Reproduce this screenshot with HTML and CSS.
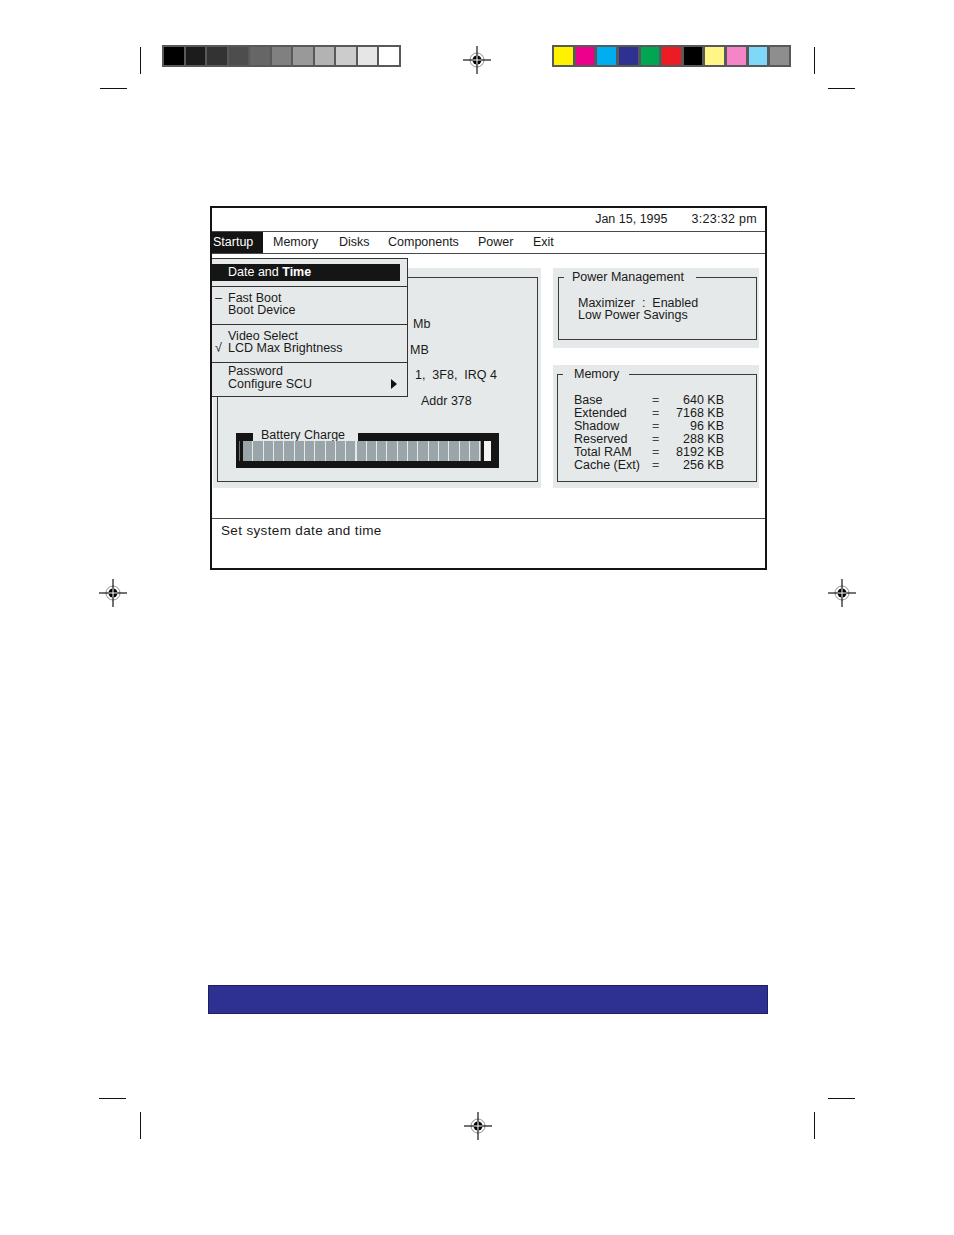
FILE: index.html
```html
<!DOCTYPE html>
<html lang="en">
<head>
<meta charset="utf-8">
<title>SCU Startup Menu</title>
<link rel="stylesheet" href="styles.css">
</head>
<body>
<div class="page">
  <div class="bars">
    <div class="strip gray">
      <span class="g0"></span><span class="g1"></span><span class="g2"></span><span class="g3"></span><span class="g4"></span><span class="g5"></span><span class="g6"></span><span class="g7"></span><span class="g8"></span><span class="g9"></span><span class="g10"></span>
    </div>
    <div class="strip color">
      <span class="c0"></span><span class="c1"></span><span class="c2"></span><span class="c3"></span><span class="c4"></span><span class="c5"></span><span class="c6"></span><span class="c7"></span><span class="c8"></span><span class="c9"></span><span class="c10"></span>
    </div>
  </div>

  <div class="screen">
    <div class="hdr">
      <span class="date">Jan 15, 1995</span>
      <span class="time">3:23:32 pm</span>
    </div>
    <div class="menu">
      <span class="m-startup">Startup</span>
      <span class="m-memory">Memory</span>
      <span class="m-disks">Disks</span>
      <span class="m-comp">Components</span>
      <span class="m-power">Power</span>
      <span class="m-exit">Exit</span>
    </div>
    <div class="body">
      <div class="left">
        <div class="left-box">
          <div class="val v1">Mb</div>
          <div class="val v2">MB</div>
          <div class="val v3">1,&nbsp; 3F8,&nbsp; IRQ 4</div>
          <div class="val v4">Addr 378</div>
          <div class="battery">
            <div class="bat-top"><span class="notch">Battery Charge</span></div>
            <div class="bat-bar">
              <span class="bat-l"></span>
              <span class="bat-seg"></span>
              <span class="bat-gap"></span>
              <span class="bat-end"></span>
            </div>
          </div>
        </div>
      </div>
      <div class="right">
        <div class="panel pm">
          <fieldset>
            <legend>Power Management</legend>
            <div class="fs-body">
              <div>Maximizer&nbsp; :&nbsp; Enabled</div>
              <div>Low Power Savings</div>
            </div>
          </fieldset>
        </div>
        <div class="panel mem">
          <fieldset>
            <legend>Memory</legend>
            <div class="mem-grid">
              <span>Base</span><span class="eq">=</span><span class="num">640 KB</span>
              <span>Extended</span><span class="eq">=</span><span class="num">7168 KB</span>
              <span>Shadow</span><span class="eq">=</span><span class="num">96 KB</span>
              <span>Reserved</span><span class="eq">=</span><span class="num">288 KB</span>
              <span>Total RAM</span><span class="eq">=</span><span class="num">8192 KB</span>
              <span>Cache (Ext)</span><span class="eq">=</span><span class="num">256 KB</span>
            </div>
          </fieldset>
        </div>
      </div>
    </div>
    <div class="status">Set system date and time</div>

    <div class="dropdown">
      <div class="dd-g1"><div class="dd-hl">Date and <b>Time</b></div></div>
      <div class="dd-g">
        <div class="dd-item"><span class="mk">–</span>Fast Boot</div>
        <div class="dd-item"><span class="mk"></span>Boot Device</div>
      </div>
      <div class="dd-g">
        <div class="dd-item"><span class="mk"></span>Video Select</div>
        <div class="dd-item"><span class="mk">√</span>LCD Max Brightness</div>
      </div>
      <div class="dd-g last">
        <div class="dd-item"><span class="mk"></span>Password</div>
        <div class="dd-item"><span class="mk"></span>Configure SCU<span class="tri"></span></div>
      </div>
    </div>
  </div>

  <div class="blue-bar"></div>

  <span class="crop v k1"></span>
  <span class="crop h k2"></span>
  <span class="crop v k3"></span>
  <span class="crop h k4"></span>
  <span class="crop h k5"></span>
  <span class="crop v k6"></span>
  <span class="crop h k7"></span>
  <span class="crop v k8"></span>

  <svg class="reg r1" viewBox="-15 -15 30 30"><circle r="7" fill="none" stroke="#777" stroke-width="0.8"/><circle r="4.5" fill="#000"/><line x1="-14" y1="0" x2="14" y2="0" stroke="#000" stroke-width="1.1"/><line x1="0" y1="-14" x2="0" y2="14" stroke="#000" stroke-width="1.1"/><line x1="-4.5" y1="0" x2="4.5" y2="0" stroke="#fff" stroke-width="1"/><line x1="0" y1="-4.5" x2="0" y2="4.5" stroke="#fff" stroke-width="1"/></svg>
  <svg class="reg r2" viewBox="-15 -15 30 30"><circle r="7" fill="none" stroke="#777" stroke-width="0.8"/><circle r="4.5" fill="#000"/><line x1="-14" y1="0" x2="14" y2="0" stroke="#000" stroke-width="1.1"/><line x1="0" y1="-14" x2="0" y2="14" stroke="#000" stroke-width="1.1"/><line x1="-4.5" y1="0" x2="4.5" y2="0" stroke="#fff" stroke-width="1"/><line x1="0" y1="-4.5" x2="0" y2="4.5" stroke="#fff" stroke-width="1"/></svg>
  <svg class="reg r3" viewBox="-15 -15 30 30"><circle r="7" fill="none" stroke="#777" stroke-width="0.8"/><circle r="4.5" fill="#000"/><line x1="-14" y1="0" x2="14" y2="0" stroke="#000" stroke-width="1.1"/><line x1="0" y1="-14" x2="0" y2="14" stroke="#000" stroke-width="1.1"/><line x1="-4.5" y1="0" x2="4.5" y2="0" stroke="#fff" stroke-width="1"/><line x1="0" y1="-4.5" x2="0" y2="4.5" stroke="#fff" stroke-width="1"/></svg>
  <svg class="reg r4" viewBox="-15 -15 30 30"><circle r="7" fill="none" stroke="#777" stroke-width="0.8"/><circle r="4.5" fill="#000"/><line x1="-14" y1="0" x2="14" y2="0" stroke="#000" stroke-width="1.1"/><line x1="0" y1="-14" x2="0" y2="14" stroke="#000" stroke-width="1.1"/><line x1="-4.5" y1="0" x2="4.5" y2="0" stroke="#fff" stroke-width="1"/><line x1="0" y1="-4.5" x2="0" y2="4.5" stroke="#fff" stroke-width="1"/></svg>
</div>
</body>
</html>
```

FILE: styles.css
```css
* { box-sizing: border-box; }
html, body { margin: 0; padding: 0; background: #fff; }
body { font-family: "Liberation Sans", Arial, sans-serif; color: #1a1a1a; }

.page { position: relative; width: 954px; height: 1235px; overflow: hidden; }

/* colour bars */
.bars { display: flex; gap: 151px; padding: 45px 0 0 162px; }
.strip { width: 239px; height: 22px; background: #58595b; padding: 2px; display: grid; grid-template-columns: repeat(11, 1fr); }
.strip.gray { gap: 2px; }
.strip.color { gap: 3px; }
.strip span { display: block; }
.g0 { background: #000; }
.g1 { background: #1c1c1c; }
.g2 { background: #333; }
.g3 { background: #4d4d4d; }
.g4 { background: #666; }
.g5 { background: #808080; }
.g6 { background: #999; }
.g7 { background: #b3b3b3; }
.g8 { background: #ccc; }
.g9 { background: #e6e6e6; }
.g10 { background: #fff; }
.c0 { background: #fff200; }
.c1 { background: #ec008c; }
.c2 { background: #00aeef; }
.c3 { background: #2e3192; }
.c4 { background: #00a651; }
.c5 { background: #ed1c24; }
.c6 { background: #000; }
.c7 { background: #fff685; }
.c8 { background: #f585c6; }
.c9 { background: #80d8f8; }
.c10 { background: #8e8e8e; }

/* screen */
.screen { margin: 139px 0 0 210px; width: 557px; height: 364px; border: 2px solid #141414; position: relative; font-size: 12.5px; line-height: 1; }
.hdr { height: 24px; border-bottom: 1px solid #4a4a4a; display: flex; justify-content: flex-end; align-items: center; padding-right: 8px; }
.date { margin-right: 24px; }
.time { letter-spacing: 0.3px; }

.menu { height: 22px; border-bottom: 1px solid #4a4a4a; display: flex; }
.menu span { display: flex; align-items: center; }
.m-startup { width: 51px; background: #141414; color: #fff; padding-left: 1px; }
.m-memory { margin-left: 10px; width: 66px; }
.m-disks { width: 49px; }
.m-comp { width: 90px; }
.m-power { width: 55px; }

.body { height: 264px; display: flex; padding: 14px 6px 0 1px; }
.left { width: 328px; height: 220px; background: #e6e9e9; padding: 9px 3px 6px 4px; }
.left-box { height: 100%; border: 1px solid #3a3a3a; padding-top: 34px; }
.val { height: 25.6px; line-height: 25.6px; white-space: nowrap; }
.v1 { padding-left: 195px; }
.v2 { padding-left: 192px; }
.v3 { padding-left: 197px; }
.v4 { padding-left: 203px; }

.battery { margin: 19px 0 0 18px; width: 263px; height: 35px; background: #151515; display: flex; flex-direction: column; }
.bat-top { height: 8px; display: flex; }
.notch { margin-left: 17px; width: 105px; height: 8px; background: #e6e9e9; line-height: 5px; padding-left: 8px; white-space: nowrap; }
.bat-bar { height: 20px; display: flex; }
.bat-bar span { display: block; }
.bat-l { width: 7px; border-left: 3px solid #151515; border-right: 3px solid #151515; background: #6d6d6d; }
.bat-seg { width: 238px; background: repeating-linear-gradient(to right, #9aa5aa 0, #9aa5aa 9.3px, #e4e8e8 9.3px, #e4e8e8 10.32px); }
.bat-gap { width: 3px; }
.bat-end { width: 7px; background: #f4f4f4; }

.right { margin-left: 12px; width: 206px; display: flex; flex-direction: column; gap: 17px; }
.panel { background: #e6e9e9; }
.pm { height: 80px; padding: 2px 2px 0 5px; }
.mem { height: 123px; padding: 2px 2px 0 4px; }
fieldset { margin: 0; padding: 0; border: 1px solid #3a3a3a; min-width: 0; }
.pm fieldset { height: 70px; }
.mem fieldset { height: 115px; }
legend { font-size: 12.5px; line-height: 14px; margin-left: 5px; }
.pm legend { padding: 0 12px 0 8px; }
.mem legend { padding: 0 10px 0 11px; }
.fs-body { padding: 12.5px 0 0 19px; line-height: 12.5px; white-space: nowrap; }
.mem-grid { display: grid; grid-template-columns: 78px 8px 64px; line-height: 12.85px; padding: 13.3px 0 0 16px; white-space: nowrap; }
.mem-grid .eq { color: #444; }
.mem-grid .num { text-align: right; }

.status { height: 50px; border-top: 1px solid #4a4a4a; padding: 5px 0 0 9px; font-size: 13.5px; letter-spacing: 0.35px; line-height: 14px; }

/* drop-down menu overlay */
.dropdown { position: absolute; left: 0; top: 50px; width: 196px; background: #e6e9e9; border: 1px solid #333; border-left: none; }
.dd-g1 { height: 27px; padding-top: 5px; }
.dd-hl { width: 188px; height: 17px; background: #151515; color: #fff; padding-left: 16px; line-height: 17px; }
.dd-hl b { font-weight: bold; }
.dd-g { border-top: 1px solid #333; padding: 4.75px 0 7.25px 3px; line-height: 12.5px; }
.dd-g.last { padding-top: 1.5px; padding-bottom: 5.5px; line-height: 13px; }
.dd-item { display: flex; align-items: center; white-space: nowrap; }
.mk { width: 13px; flex: none; }
.tri { margin-left: auto; margin-right: 10px; width: 0; height: 0; border-left: 6px solid #111; border-top: 5px solid transparent; border-bottom: 5px solid transparent; }

/* blue bar */
.blue-bar { margin: 415px 0 0 208px; width: 560px; height: 29px; background: #2e3192; border: 1px solid #1d1f5e; }

/* printer's crop marks */
.crop { position: absolute; background: #111; }
.crop.v { width: 1px; height: 27px; }
.crop.h { width: 27px; height: 1px; }
.k1 { left: 140px; top: 47px; }
.k2 { left: 100px; top: 88px; }
.k3 { left: 814px; top: 47px; }
.k4 { left: 828px; top: 88px; }
.k5 { left: 99px; top: 1098px; }
.k6 { left: 140px; top: 1112px; height: 28px; }
.k7 { left: 828px; top: 1098px; }
.k8 { left: 814px; top: 1112px; height: 28px; }

/* registration targets */
.reg { position: absolute; width: 30px; height: 30px; }
.r1 { left: 462px; top: 45px; }
.r2 { left: 98px; top: 578px; }
.r3 { left: 827px; top: 578px; }
.r4 { left: 463px; top: 1111px; }
```
